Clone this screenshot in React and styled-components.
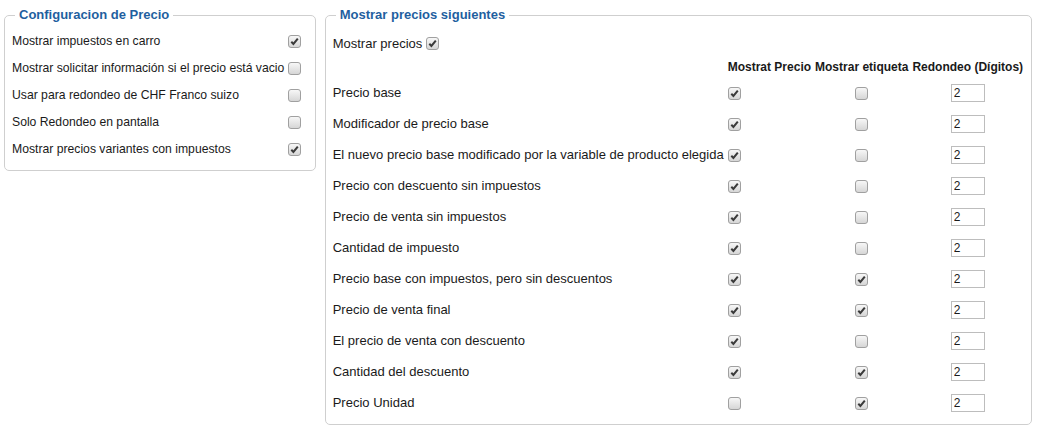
import styled, { createGlobalStyle } from "styled-components";

const GlobalStyle = createGlobalStyle`
  body {
    margin: 0;
    background: #fff;
    font-family: "Liberation Sans", Arial, sans-serif;
    font-size: 12px;
    color: #1a1a1a;
  }
`;

const Page = styled.div`
  display: flex;
  align-items: flex-start;
  gap: 9px;
  padding: 7px 6px 0 4px;
`;

const Fieldset = styled.fieldset`
  margin: 0;
  border: 1px solid #cfcfcf;
  border-radius: 5px;
  width: ${(p) => p.$width}px;
  box-sizing: border-box;
  padding: ${(p) => p.$padding};
  min-width: 0;
`;

const Legend = styled.legend`
  margin-left: 3px;
  padding: 0 4px;
  font-size: 13px;
  font-weight: bold;
  line-height: 16px;
  color: #1f5f9f;
`;

const OptionGrid = styled.div`
  display: grid;
  grid-template-columns: max-content max-content;
  column-gap: 4px;
  align-items: center;
  font-size: 12.2px;
`;

const OptionLabel = styled.div`
  height: 27px;
  line-height: 27px;
  white-space: nowrap;
`;

const Box = styled.span`
  display: inline-flex;
  align-items: center;
  justify-content: center;
  width: 13px;
  height: 13px;
  box-sizing: border-box;
  border: 1px solid #a0a0a0;
  border-radius: 3px;
  background: linear-gradient(#f7f7f7, #d6d6d6);
  vertical-align: middle;
`;

const Check = ({ checked }) => (
  <Box>
    {checked && (
      <svg width="9" height="9" viewBox="0 0 9 9">
        <path d="M1.3 4.8 L3.4 7 L7.8 1.6" fill="none" stroke="#3a3a3a" strokeWidth="2" />
      </svg>
    )}
  </Box>
);

const TopRow = styled.div`
  height: 28px;
  display: flex;
  align-items: center;
  gap: 4px;
  font-size: 13px;
`;

const Table = styled.table`
  border-collapse: collapse;
  font-size: 13px;
`;

const Th = styled.th`
  font-size: 12px;
  font-weight: bold;
  white-space: nowrap;
  height: 20px;
  padding: 0 2px;
  text-align: ${(p) => p.$align || "center"};
  vertical-align: middle;
`;

const Td = styled.td`
  height: 31px;
  padding: 0 2px 0 ${(p) => (p.$first ? 0 : 2)}px;
  text-align: ${(p) => p.$align || "center"};
  vertical-align: middle;
  white-space: nowrap;
`;

const Digits = styled.input`
  width: 34px;
  height: 18px;
  box-sizing: border-box;
  border: 1px solid #bdbdbd;
  padding: 0 2px;
  font-family: "Liberation Sans", Arial, sans-serif;
  font-size: 12px;
  color: #1a1a1a;
  vertical-align: middle;
  outline: none;
`;

const options = [
  ["Mostrar impuestos en carro", true],
  ["Mostrar solicitar información si el precio está vacio", false],
  ["Usar para redondeo de CHF Franco suizo", false],
  ["Solo Redondeo en pantalla", false],
  ["Mostrar precios variantes con impuestos", true],
];

const prices = [
  ["Precio base", true, false],
  ["Modificador de precio base", true, false],
  ["El nuevo precio base modificado por la variable de producto elegida", true, false],
  ["Precio con descuento sin impuestos", true, false],
  ["Precio de venta sin impuestos", true, false],
  ["Cantidad de impuesto", true, false],
  ["Precio base con impuestos, pero sin descuentos", true, true],
  ["Precio de venta final", true, true],
  ["El precio de venta con descuento", true, false],
  ["Cantidad del descuento", true, true],
  ["Precio Unidad", false, true],
];

export default function App() {
  return (
    <>
      <GlobalStyle />
      <Page>
        <Fieldset $width={312} $padding="5px 12px 7px 7px">
          <Legend>Configuracion de Precio</Legend>
          <OptionGrid>
            {options.map(([label, on]) => (
              <>
                <OptionLabel key={label}>{label}</OptionLabel>
                <Check checked={on} />
              </>
            ))}
          </OptionGrid>
        </Fieldset>
        <Fieldset $width={708} $padding="6px 8px 6px 7px">
          <Legend>Mostrar precios siguientes</Legend>
          <TopRow>
            Mostrar precios <Check checked />
          </TopRow>
          <Table>
            <thead>
              <tr>
                <Th />
                <Th $align="left">Mostrat Precio</Th>
                <Th>Mostrar etiqueta</Th>
                <Th>Redondeo (Dígitos)</Th>
              </tr>
            </thead>
            <tbody>
              {prices.map(([label, show, tag]) => (
                <tr key={label}>
                  <Td $first $align="left">{label}</Td>
                  <Td $align="left">
                    <Check checked={show} />
                  </Td>
                  <Td>
                    <Check checked={tag} />
                  </Td>
                  <Td>
                    <Digits defaultValue="2" />
                  </Td>
                </tr>
              ))}
            </tbody>
          </Table>
        </Fieldset>
      </Page>
    </>
  );
}
